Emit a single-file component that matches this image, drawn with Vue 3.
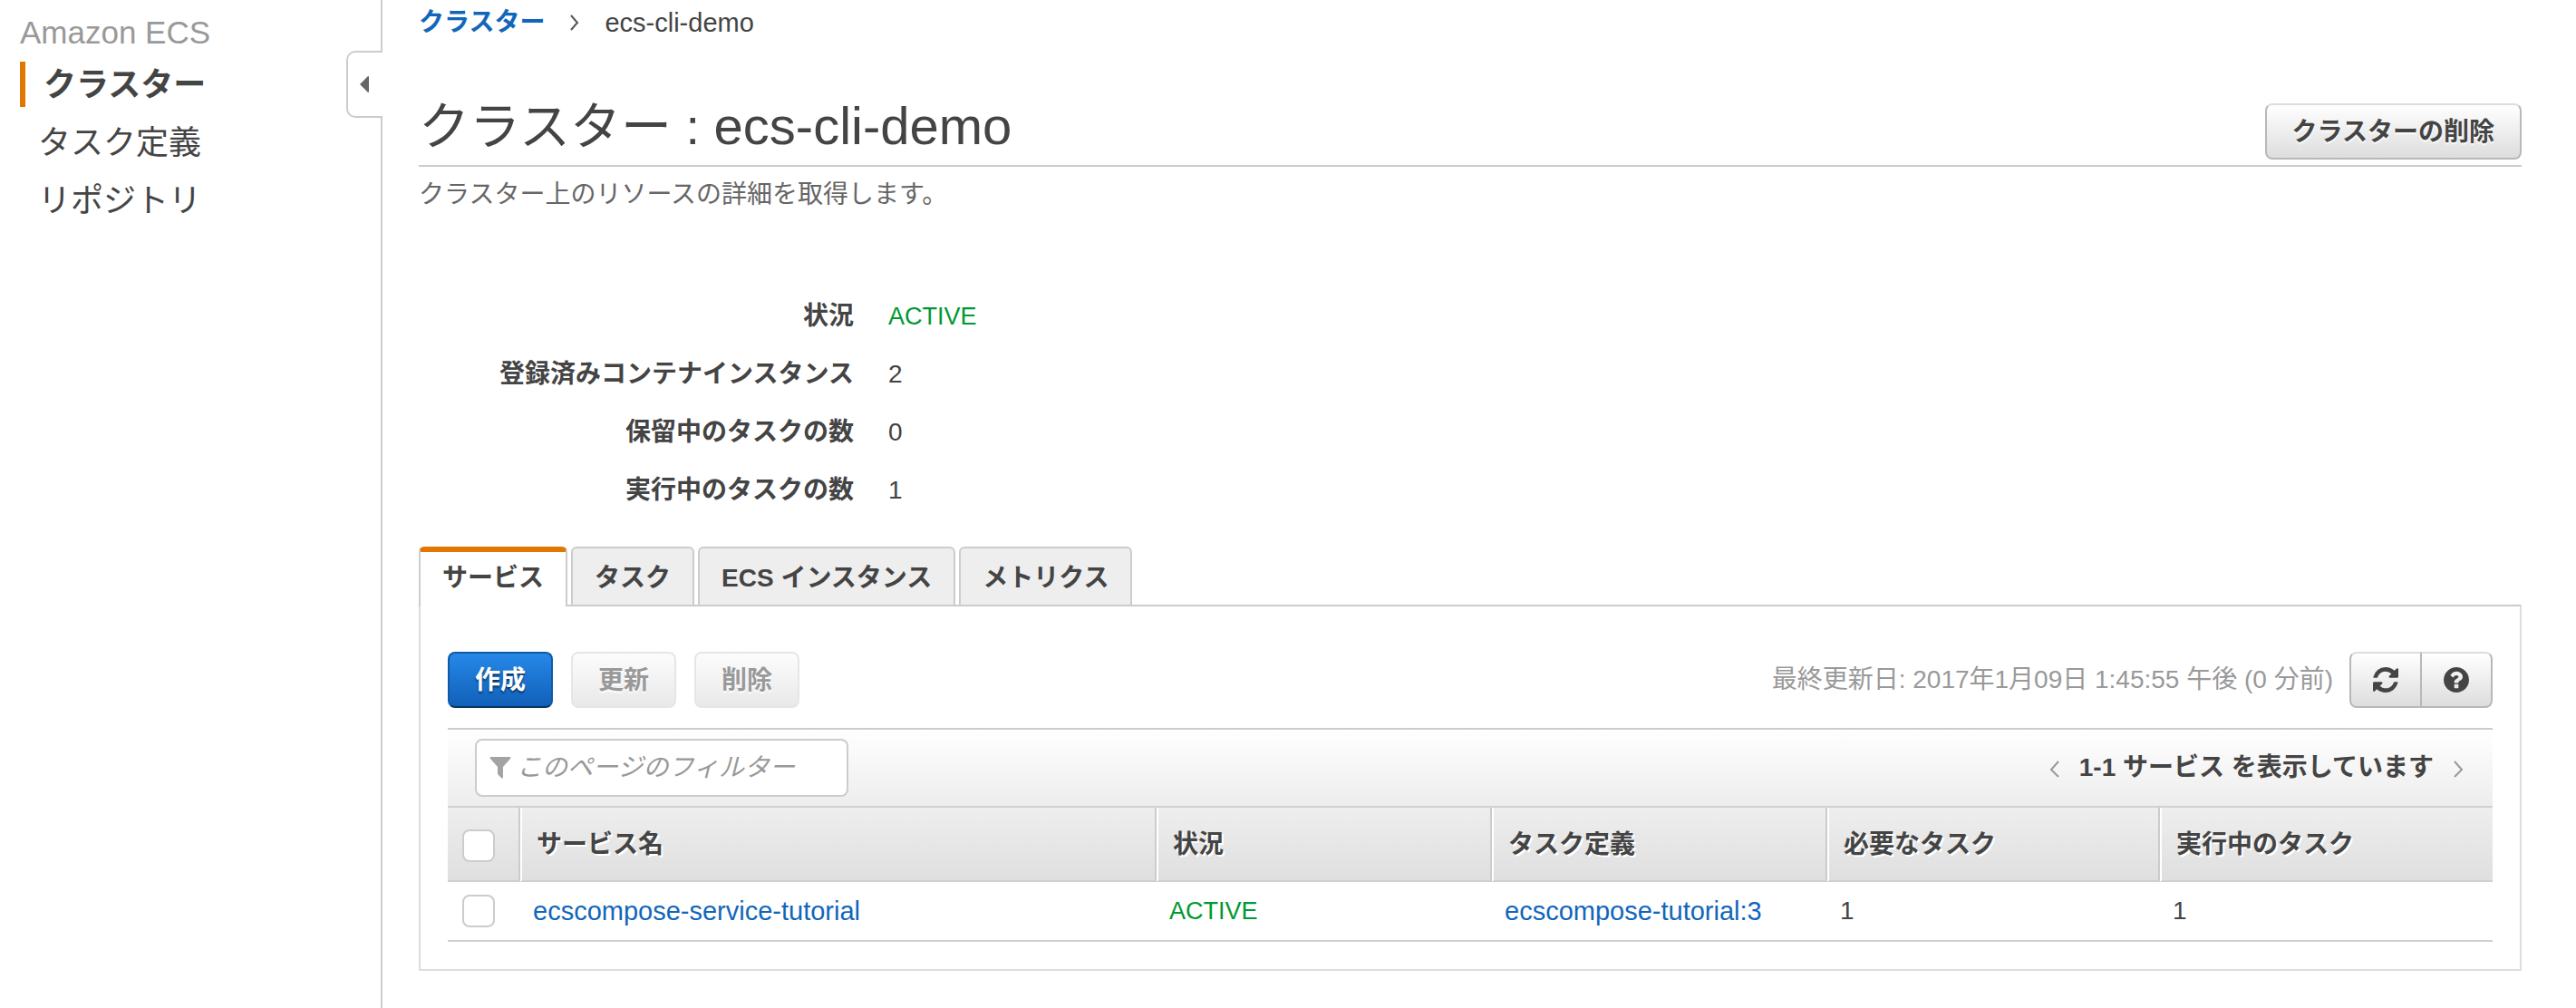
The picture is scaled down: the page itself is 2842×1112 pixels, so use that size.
<script setup>
import { ref, computed } from 'vue'

const nav = [
  { label: 'クラスター', current: true },
  { label: 'タスク定義', current: false },
  { label: 'リポジトリ', current: false },
]
const facts = [
  { label: '状況', value: 'ACTIVE', ok: true },
  { label: '登録済みコンテナインスタンス', value: '2' },
  { label: '保留中のタスクの数', value: '0' },
  { label: '実行中のタスクの数', value: '1' },
]
const tabs = ['サービス', 'タスク', 'ECS インスタンス', 'メトリクス']
const activeTab = ref(0)
const services = [
  { name: 'ecscompose-service-tutorial', status: 'ACTIVE', task: 'ecscompose-tutorial:3', desired: 1, running: 1 },
]
const selected = ref([])
const filter = ref('')
const shown = computed(() => services.filter((s) => s.name.includes(filter.value)))
const toggleAll = (e) => {
  selected.value = e.target.checked ? services.map((s) => s.name) : []
}
</script>

<template>
  <div class="console">
    <aside class="sidebar">
      <h2 class="product">Amazon ECS</h2>
      <nav>
        <a v-for="n in nav" :key="n.label" href="#" class="nav-link" :class="{ current: n.current }">{{ n.label }}</a>
      </nav>
      <button class="collapse" type="button" aria-label="メニューを閉じる">
        <svg width="10" height="18" viewBox="0 0 10 18"><path d="M9 0Q10 0 10 1V17Q10 18 9 18L0 9Z" fill="#666" /></svg>
      </button>
    </aside>

    <main class="main">
      <nav class="crumbs">
        <a href="#">クラスター</a>
        <svg width="10" height="18" viewBox="0 0 10 18" fill="none" stroke="#555" stroke-width="2"><path d="M1 1L8 9L1 17" /></svg>
        <span class="latin">ecs-cli-demo</span>
      </nav>

      <header class="title-row">
        <h1>クラスター : <span class="title-latin">ecs-cli-demo</span></h1>
        <button class="btn" type="button">クラスターの削除</button>
      </header>
      <p class="lead">クラスター上のリソースの詳細を取得します。</p>

      <dl class="facts">
        <div v-for="f in facts" :key="f.label" class="fact">
          <dt>{{ f.label }}</dt>
          <dd :class="{ ok: f.ok }">{{ f.value }}</dd>
        </div>
      </dl>

      <div class="tabs" role="tablist">
        <button
          v-for="(t, i) in tabs"
          :key="t"
          type="button"
          role="tab"
          class="tab"
          :class="{ active: i === activeTab }"
          :aria-selected="i === activeTab"
          @click="activeTab = i"
        >{{ t }}</button>
      </div>

      <section class="panel">
        <div class="toolbar">
          <button class="btn primary" type="button">作成</button>
          <button class="btn" type="button" disabled>更新</button>
          <button class="btn" type="button" disabled>削除</button>
          <div class="status">
            <span>最終更新日: 2017年1月09日 1:45:55 午後 (0 分前)</span>
            <div class="group">
              <button class="btn icon" type="button" aria-label="更新">
                <svg width="28" height="28" viewBox="0 0 1536 1536" fill="#444"><path d="M1511 928q0 5-1 7-64 268-268 434.500T764 1536q-146 0-282.500-55T238 1324l-129 129q-19 19-45 19t-45-19-19-45V960q0-26 19-45t45-19h448q26 0 45 19t19 45-19 45l-137 137q71 66 161 102t187 36q134 0 250-65t186-179q11-17 53-117 8-23 30-23h192q13 0 22.500 9.500t9.500 22.500zm25-800v448q0 26-19 45t-45 19h-448q-26 0-45-19t-19-45 19-45l138-138Q969 256 768 256q-134 0-250 65T332 500q-11 17-53 117-8 23-30 23H50q-13 0-22.500-9.500T18 608v-7q65-268 270-434.500T768 0q146 0 284 55.500T1297 212l130-129q19-19 45-19t45 19 19 45z" /></svg>
              </button>
              <button class="btn icon" type="button" aria-label="ヘルプ">
                <svg width="28" height="28" viewBox="0 0 1536 1536" fill="#444"><path d="M896 1248v-192q0-14-9-23t-23-9H672q-14 0-23 9t-9 23v192q0 14 9 23t23 9h192q14 0 23-9t9-23zm256-672q0-88-55.500-163T958 297t-170-41q-243 0-371 213-15 24 8 42l132 100q7 6 19 6 16 0 25-12 53-68 86-92 34-24 86-24 48 0 85.500 26t37.500 59q0 38-20 61t-68 45q-63 28-115.500 86.500T640 892v36q0 14 9 23t23 9h192q14 0 23-9t9-23q0-19 21.500-49.500T972 829q32-18 49-28.500t46-35 44.500-48 28-60.500 12.500-81zm384 192q0 209-103 385.500T1153.500 1433 768 1536t-385.500-103T103 1153.500 0 768t103-385.500T382.500 103 768 0t385.500 103T1433 382.500 1536 768z" /></svg>
              </button>
            </div>
          </div>
        </div>

        <div class="filter-bar">
          <label class="filter">
            <svg width="24" height="24" viewBox="0 0 24 24" fill="#a3a3a3"><path d="M1 0H23Q24 1 23 2L15 11V23Q14 24 13 23L9 19V11L1 2Q0 1 1 0Z" /></svg>
            <input v-model="filter" type="text" placeholder="このページのフィルター" aria-label="このページのフィルター" />
          </label>
          <div class="pager">
            <button type="button" aria-label="前へ">
              <svg width="12" height="20" viewBox="0 0 12 20" fill="none" stroke="#999" stroke-width="2"><path d="M10 2L2 11L10 19" /></svg>
            </button>
            <span>1-1 サービス を表示しています</span>
            <button type="button" aria-label="次へ">
              <svg width="12" height="20" viewBox="0 0 12 20" fill="none" stroke="#999" stroke-width="2"><path d="M2 2L10 11L2 19" /></svg>
            </button>
          </div>
        </div>

        <table class="grid">
          <colgroup>
            <col class="c-check" />
            <col />
            <col class="c-text" />
            <col class="c-text" />
            <col class="c-count" />
            <col class="c-count" />
          </colgroup>
          <thead>
            <tr>
              <th class="check"><input type="checkbox" aria-label="すべて選択" @change="toggleAll" /></th>
              <th>サービス名</th>
              <th>状況</th>
              <th>タスク定義</th>
              <th>必要なタスク</th>
              <th>実行中のタスク</th>
            </tr>
          </thead>
          <tbody>
            <tr v-for="s in shown" :key="s.name">
              <td class="check"><input v-model="selected" type="checkbox" :value="s.name" :aria-label="s.name" /></td>
              <td class="latin"><a href="#">{{ s.name }}</a></td>
              <td class="ok">{{ s.status }}</td>
              <td class="latin"><a href="#">{{ s.task }}</a></td>
              <td>{{ s.desired }}</td>
              <td>{{ s.running }}</td>
            </tr>
          </tbody>
        </table>
      </section>
    </main>
  </div>
</template>

<style>
body {
  margin: 0;
  background: #fff;
}
</style>

<style scoped>
.console,
.console button,
.console input {
  font-family: "Liberation Sans", "Noto Sans CJK JP", sans-serif;
  font-size: 28px;
}
.console {
  display: flex;
  min-height: 100vh;
  color: #444;
  line-height: 40px;
}
.console *,
.console {
  box-sizing: border-box;
}
a {
  color: #1166bb;
  text-decoration: none;
}
button {
  cursor: pointer;
}
.latin {
  font-size: 29px;
}
.ok {
  font-size: 27px;
  color: #009933;
}

.sidebar {
  position: relative;
  flex: 0 0 422px;
  padding: 12px 0 0 22px;
  border-right: 2px solid #ccc;
}
.product {
  margin: 0;
  font-size: 35px;
  font-weight: 400;
  line-height: 48px;
  color: #999;
}
.nav-link {
  display: block;
  margin: 8px 0 14px;
  padding: 2px 0 0 20px;
  font-size: 36px;
  line-height: 48px;
  color: #444;
}
.nav-link.current {
  border-left: 6px solid #e17700;
  font-weight: 700;
}
.collapse {
  position: absolute;
  top: 56px;
  right: -2px;
  width: 40px;
  height: 74px;
  padding: 0 15px 0 13px;
  display: flex;
  align-items: center;
  background: #fff;
  border: 2px solid #ccc;
  border-right: 0;
  border-radius: 10px 0 0 10px;
}

.main {
  flex: 1;
  min-width: 0;
  padding: 5px 60px 42px 40px;
}
.crumbs {
  display: flex;
  align-items: center;
  gap: 28px;
}
.crumbs a {
  font-weight: 700;
}
.title-row {
  display: flex;
  align-items: flex-end;
  justify-content: space-between;
  margin-top: 55px;
  height: 84px;
  border-bottom: 2px solid #ccc;
}
.title-row h1 {
  margin: 0;
  font-size: 56px;
  font-weight: 400;
  line-height: 84px;
}
.title-latin {
  font-size: 58px;
}
.title-row .btn {
  margin-bottom: 6px;
}
.lead {
  margin: 11px 0 0;
  color: #666;
}

.btn {
  height: 62px;
  padding: 2px 28px 0;
  border: 2px solid #b8b8b8;
  border-top-color: #ddd;
  border-radius: 8px;
  background: linear-gradient(#fff, #ddd);
  color: #444;
  font-weight: 700;
  line-height: 40px;
  text-shadow: 0 2px 2px #fff;
}
.btn:disabled {
  border-color: #e6e6e6;
  background: linear-gradient(#fcfcfc, #e9e9e9);
  color: #999;
}
.btn.primary {
  border-color: #0d5aa7;
  border-bottom-color: #073763;
  background: linear-gradient(#2688e8, #1160b8);
  color: #fff;
  text-shadow: 0 2px 2px #053260;
}

.facts {
  margin: 82px 0 30px;
}
.fact {
  display: flex;
  gap: 38px;
  line-height: 44px;
  padding: 10px 0;
}
.fact dt {
  width: 480px;
  text-align: right;
  font-weight: 700;
}
.fact dd {
  margin: 0;
}

.tabs {
  display: flex;
  gap: 4px;
}
.tab {
  height: 64px;
  padding: 0 24px 2px;
  border: 2px solid #ccc;
  border-bottom: 0;
  border-radius: 6px 6px 0 0;
  background: #eee;
  color: #444;
  font-weight: 700;
}
.tab.active {
  position: relative;
  height: 66px;
  margin-bottom: -2px;
  padding-bottom: 8px;
  border-top: 6px solid #e17700;
  background: #fff;
}
.panel {
  padding: 50px 30px 30px;
  border: 2px solid #ddd;
  border-top-color: #ccc;
}
.toolbar {
  display: flex;
  align-items: center;
  gap: 20px;
  padding-bottom: 22px;
  border-bottom: 2px solid #ccc;
}
.status {
  display: flex;
  align-items: center;
  gap: 18px;
  margin-left: auto;
  color: #999;
}
.group {
  display: flex;
}
.btn.icon {
  width: 80px;
  padding: 0;
  display: flex;
  align-items: center;
  justify-content: center;
}
.btn.icon:first-child {
  border-radius: 8px 0 0 8px;
}
.btn.icon + .btn.icon {
  margin-left: -2px;
  border-radius: 0 8px 8px 0;
}

.filter-bar {
  display: flex;
  align-items: center;
  justify-content: space-between;
  padding: 10px 32px 10px 30px;
  border-bottom: 2px solid #d0d0d0;
  background: linear-gradient(#fff, #ededed);
}
.filter {
  display: flex;
  align-items: center;
  gap: 6px;
  width: 412px;
  height: 64px;
  padding: 0 14px;
  border: 2px solid #ccc;
  border-radius: 8px;
  background: #fff;
}
.filter input {
  flex: 1;
  min-width: 0;
  padding: 0;
  border: 0;
  outline: 0;
  background: none;
}
.filter input::placeholder {
  color: #999;
  font-style: italic;
}
.pager {
  display: flex;
  align-items: center;
  gap: 21px;
  font-weight: 700;
}
.pager button {
  display: flex;
  padding: 2px 0 0;
  border: 0;
  background: none;
}

.grid {
  width: 100%;
  table-layout: fixed;
  border-collapse: separate;
  border-spacing: 0;
}
.c-check {
  width: 80px;
}
.c-text {
  width: 370px;
}
.c-count {
  width: 367px;
}
.grid th {
  height: 82px;
  padding: 2px 16px 0;
  border-bottom: 2px solid #d0d0d0;
  border-left: 2px solid #fff;
  border-right: 2px solid #ccc;
  background: linear-gradient(#eee, #dfdfdf);
  text-align: left;
  font-weight: 700;
  text-shadow: 2px 2px 0 #fff;
}
.grid th:first-child {
  border-left: 0;
}
.grid th:last-child {
  border-right: 0;
}
.grid td {
  height: 66px;
  padding: 0 14px;
  border-bottom: 2px solid #d0d0d0;
}
.grid td.check {
  padding: 0 0 0 16px;
}
.grid th.check {
  padding: 4px 0 0 16px;
}
.check input {
  display: block;
  width: 36px;
  height: 36px;
  margin: 0;
  appearance: none;
  border: 2px solid #ccc;
  border-radius: 8px;
  background: #fff;
}
.check input:checked {
  background: #1166bb;
}
</style>
